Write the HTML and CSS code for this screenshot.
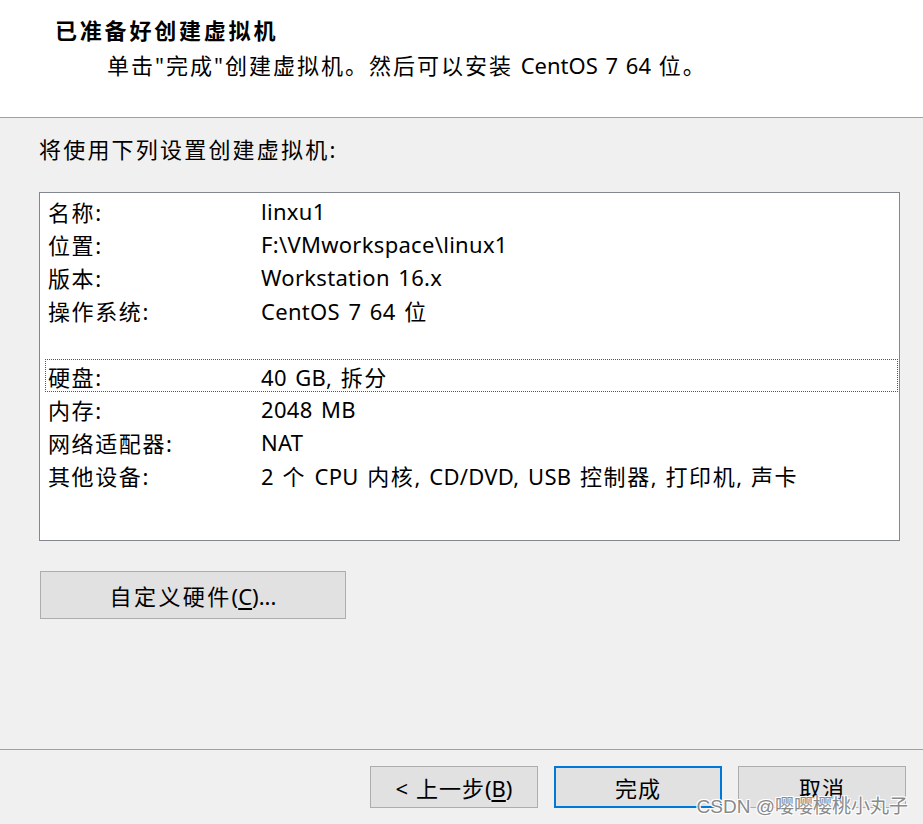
FILE: index.html
```html
<!DOCTYPE html>
<html lang="zh-CN">
<head>
<meta charset="utf-8">
<title>新建虚拟机向导</title>
<link rel="stylesheet" href="styles.css">
</head>
<body>
<div class="dialog">
  <header class="head">
    <h1 class="title">已准备好创建虚拟机</h1>
    <p class="subtitle"><span class="cj">单击"完成"创建虚拟机。然后可以安装</span> CentOS 7 64 <span class="cj">位。</span></p>
  </header>
  <main class="main">
    <p class="intro">将使用下列设置创建虚拟机:</p>
    <div class="listbox">
      <div class="row"><span class="key">名称:</span><span class="val">linxu1</span></div>
      <div class="row"><span class="key">位置:</span><span class="val">F:\VMworkspace\linux1</span></div>
      <div class="row"><span class="key">版本:</span><span class="val">Workstation 16.x</span></div>
      <div class="row"><span class="key">操作系统:</span><span class="val">CentOS 7 64 <span class="cj">位</span></span></div>
      <div class="row"></div>
      <div class="row focus"><span class="key">硬盘:</span><span class="val">40 GB, <span class="cj">拆分</span></span></div>
      <div class="row"><span class="key">内存:</span><span class="val">2048 MB</span></div>
      <div class="row"><span class="key">网络适配器:</span><span class="val">NAT</span></div>
      <div class="row"><span class="key">其他设备:</span><span class="val">2 <span class="cj">个</span> CPU <span class="cj">内核</span>, CD/DVD, USB <span class="cj">控制器</span>, <span class="cj">打印机</span>, <span class="cj">声卡</span></span></div>
    </div>
    <button class="btn custom"><span class="cj">自定义硬件</span>(<u>C</u>)...</button>
  </main>
  <footer class="foot">
    <button class="btn nav">&lt; <span class="cj">上一步</span>(<u>B</u>)</button>
    <button class="btn nav default"><span class="cj">完成</span></button>
    <button class="btn nav"><span class="cj">取消</span></button>
  </footer>
  <div class="watermark">CSDN @嘤嘤樱桃小丸子</div>
</div>
</body>
</html>
```
FILE: styles.css
```css
html, body {
  margin: 0;
  padding: 0;
}
body {
  background: #f0f0f0;
  font-family: "Noto Sans", "Noto Sans CJK SC", sans-serif;
  color: #000;
}
.dialog {
  position: relative;
  width: 923px;
  height: 824px;
  overflow: hidden;
  display: flex;
  flex-direction: column;
}
.cj {
  letter-spacing: 1.2px;
}
.head {
  background: #fff;
  height: 118px;
  box-sizing: border-box;
  border-bottom: 1px solid #a0a0a0;
  padding: 13px 0 0 55px;
}
.title {
  margin: 0;
  font-size: 22px;
  font-weight: bold;
  letter-spacing: 2.8px;
  line-height: 32px;
  font-family: "Noto Sans CJK SC", sans-serif;
}
.subtitle {
  margin: 4px 0 0 52px;
  font-size: 22px;
  line-height: 32px;
  word-spacing: 2px;
}
.subtitle .cj {
  letter-spacing: 2px;
}
.main {
  flex: 1;
  padding: 0 0 0 39px;
}
.intro {
  margin: 16px 0 0 0;
  font-size: 22px;
  line-height: 30px;
  letter-spacing: 2.2px;
}
.listbox {
  margin-top: 28px;
  width: 861px;
  height: 349px;
  box-sizing: border-box;
  background: #fff;
  border: 1px solid #828790;
  padding: 1px 1px 0 5px;
}
.row {
  display: flex;
  height: 33px;
  align-items: center;
  font-size: 22px;
  padding-left: 3px;
  box-sizing: border-box;
}
.row.focus {
  outline: 1px dotted #555;
  outline-offset: -1px;
}
.key {
  width: 213px;
  letter-spacing: 1.6px;
}
.val {
  letter-spacing: 0.3px;
  word-spacing: 2.5px;
}
.val .cj {
  letter-spacing: 1.6px;
}
.btn {
  font-family: "Noto Sans", "Noto Sans CJK SC", sans-serif;
  background: #e1e1e1;
  border: 1px solid #adadad;
  color: #000;
  padding: 0;
  margin: 0;
}
.btn u {
  text-underline-offset: 3px;
}
.custom {
  display: block;
  margin: 30px 0 0 1px;
  width: 306px;
  height: 48px;
  font-size: 22px;
}
.custom .cj {
  letter-spacing: 2.4px;
}
.foot {
  height: 75px;
  border-top: 1px solid #a0a0a0;
  display: flex;
  gap: 16px;
  padding: 16px 0 0 370px;
  box-sizing: border-box;
}
.nav {
  width: 168px;
  height: 42px;
  font-size: 22px;
  word-spacing: 2px;
}
.nav .cj {
  letter-spacing: 1px;
}
.nav.default {
  border: 2px solid #0078d7;
}
.watermark {
  position: absolute;
  right: 15px;
  bottom: 6px;
  font-size: 19px;
  color: #8a8a8a;
  font-family: "Liberation Sans", "Noto Sans CJK SC", sans-serif;
  text-shadow: -1px -1px 0 #fff, 1px -1px 0 #fff, -1px 1px 0 #fff, 1px 1px 0 #fff;
}
```
